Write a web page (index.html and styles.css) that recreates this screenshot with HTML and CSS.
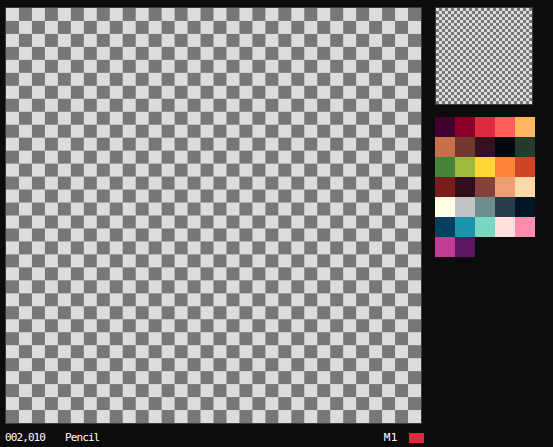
FILE: index.html
```html
<!DOCTYPE html>
<html>
<head>
<meta charset="utf-8">
<link rel="stylesheet" href="styles.css">
</head>
<body>
<div class="main">
  <div class="canvas"></div>
  <div class="side">
    <div class="preview"></div>
    <div class="palette">
      <div class="sw" style="background:#42002e"></div>
      <div class="sw" style="background:#8a0028"></div>
      <div class="sw" style="background:#dc2a40"></div>
      <div class="sw" style="background:#ff5f5a"></div>
      <div class="sw" style="background:#ffb65e"></div>
      <div class="sw" style="background:#c8704a"></div>
      <div class="sw" style="background:#723a2f"></div>
      <div class="sw" style="background:#35121f"></div>
      <div class="sw" style="background:#010810"></div>
      <div class="sw" style="background:#283a2b"></div>
      <div class="sw" style="background:#468339"></div>
      <div class="sw" style="background:#9dba3e"></div>
      <div class="sw" style="background:#ffd633"></div>
      <div class="sw" style="background:#ff8438"></div>
      <div class="sw" style="background:#d04323"></div>
      <div class="sw" style="background:#7b1c1c"></div>
      <div class="sw" style="background:#330e1a"></div>
      <div class="sw" style="background:#82433a"></div>
      <div class="sw" style="background:#eb9f72"></div>
      <div class="sw" style="background:#ffd8a9"></div>
      <div class="sw" style="background:#fffde6"></div>
      <div class="sw" style="background:#c0c3c5"></div>
      <div class="sw" style="background:#6d8e8d"></div>
      <div class="sw" style="background:#293d4b"></div>
      <div class="sw" style="background:#021625"></div>
      <div class="sw" style="background:#073f60"></div>
      <div class="sw" style="background:#1c94ab"></div>
      <div class="sw" style="background:#77d7c3"></div>
      <div class="sw" style="background:#ffe0df"></div>
      <div class="sw" style="background:#ff8baf"></div>
      <div class="sw" style="background:#c23c94"></div>
      <div class="sw" style="background:#5e1662"></div>
    </div>
  </div>
</div>
<div class="status">
  <span class="coords">002,010</span>
  <span class="tool">Pencil</span>
  <span class="spacer"></span>
  <span class="mouse">M1</span>
  <span class="current"></span>
</div>
</body>
</html>
```
FILE: styles.css
```css
html, body {
  margin: 0;
  padding: 0;
}
body {
  width: 553px;
  height: 447px;
  background: #0c0c0c;
  color: #ffffff;
  font-family: "DejaVu Sans Mono", monospace;
  font-size: 11px;
  overflow: hidden;
}
.main {
  display: flex;
  align-items: flex-start;
  padding: 7px 0 0 5px;
  gap: 13px;
}
.canvas {
  width: 415px;
  height: 415px;
  border: 1px solid #3a3a3a;
  background: repeating-conic-gradient(#777777 0 25%, #dcdcdc 0 50%);
  background-size: calc(100% / 16) calc(100% / 16);
}
.side {
  display: flex;
  flex-direction: column;
  gap: 12px;
}
.preview {
  width: 96px;
  height: 96px;
  border: 1px solid #3a3a3a;
  background: repeating-conic-gradient(#777777 0 25%, #dcdcdc 0 50%);
  background-size: 6px 6px;
}
.palette {
  display: grid;
  grid-template-columns: repeat(5, 20px);
  grid-auto-rows: 20px;
}
.status {
  display: flex;
  align-items: center;
  width: 424px;
  height: 23px;
  padding: 4px 0 0 5px;
  box-sizing: border-box;
  line-height: 1;
  letter-spacing: -0.9px;
}
.coords {
  width: 60px;
}
.mouse {
  letter-spacing: 0.5px;
}
.spacer {
  flex: 1;
}
.current {
  width: 15px;
  height: 10px;
  margin-left: 11px;
  background: #dc2a40;
}
```
